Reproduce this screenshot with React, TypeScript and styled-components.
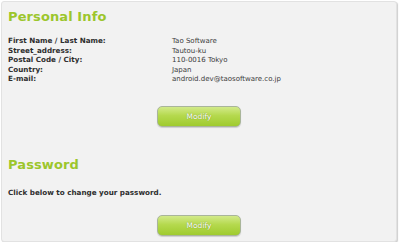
import { Fragment } from 'react';
import styled, { createGlobalStyle } from 'styled-components';

const GlobalStyle = createGlobalStyle`
  html, body {
    margin: 0;
    padding: 0;
    background: #ffffff;
  }
  body {
    font-family: "DejaVu Sans", Verdana, sans-serif;
  }
`;

const StyledPanel = styled.div`
  box-sizing: border-box;
  margin: 1px 0 0 1px;
  width: 396px;
  height: 241px;
  padding: 6px 6px 0 6px;
  background: #f2f2f2;
  border: 1px solid #e2e2e2;
  border-radius: 3px;
  box-shadow: 1px 1px 1px #cfcfcf;
`;

const StyledTitle = styled.h2<{ $top?: number }>`
  margin: ${({ $top = 0 }) => $top}px 0 0;
  font-size: 13px;
  line-height: 17px;
  font-weight: 700;
  letter-spacing: 0.1px;
  color: #9cc62c;
`;

const StyledInfoGrid = styled.div`
  display: grid;
  grid-template-columns: 164px 1fr;
  grid-auto-rows: 9.5px;
  align-items: baseline;
  margin-top: 11px;
  font-size: 7.2px;
  line-height: 9.5px;
`;

const StyledLabel = styled.span`
  font-weight: 700;
  color: #2e2e2e;
`;

const StyledValue = styled.span`
  font-size: 7px;
  color: #3c3c3c;
`;

const StyledButtonRow = styled.div<{ $top: number }>`
  display: flex;
  justify-content: center;
  margin-top: ${({ $top }) => $top}px;
`;

const StyledButton = styled.button`
  box-sizing: border-box;
  width: 84px;
  height: 21px;
  padding: 0;
  border: 1px solid #a9b59a;
  border-radius: 5px;
  background: linear-gradient(#d2ea8a 0%, #b5d94e 45%, #9fcb2e 100%);
  box-shadow: 0 1px 1px rgba(0, 0, 0, 0.15);
  color: #ffffff;
  font-family: "DejaVu Sans", Verdana, sans-serif;
  font-size: 7.5px;
  text-shadow: 0 0 1px #5f7f18;
  cursor: pointer;
`;

const StyledHint = styled.p`
  margin: 15px 0 0;
  font-size: 7.2px;
  line-height: 9px;
  font-weight: 700;
  color: #2e2e2e;
`;

const rows = [
  { label: 'First Name / Last Name:', value: 'Tao Software' },
  { label: 'Street_address:', value: 'Tautou-ku' },
  { label: 'Postal Code / City:', value: '110-0016 Tokyo' },
  { label: 'Country:', value: 'Japan' },
  { label: 'E-mail:', value: 'android.dev@taosoftware.co.jp' },
];

export default function App() {
  return (
    <>
      <GlobalStyle />
      <StyledPanel>
        <StyledTitle>Personal Info</StyledTitle>
        <StyledInfoGrid>
          {rows.map((row) => (
            <Fragment key={row.label}>
              <StyledLabel>{row.label}</StyledLabel>
              <StyledValue>{row.value}</StyledValue>
            </Fragment>
          ))}
        </StyledInfoGrid>
        <StyledButtonRow $top={22}>
          <StyledButton>Modify</StyledButton>
        </StyledButtonRow>
        <StyledTitle $top={29}>Password</StyledTitle>
        <StyledHint>Click below to change your password.</StyledHint>
        <StyledButtonRow $top={18}>
          <StyledButton>Modify</StyledButton>
        </StyledButtonRow>
      </StyledPanel>
    </>
  );
}
